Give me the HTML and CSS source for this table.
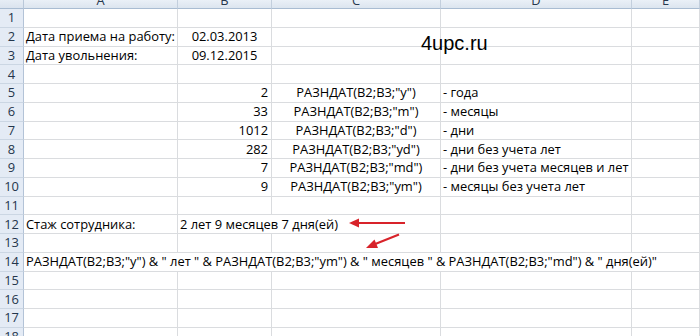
FILE: index.html
```html
<!DOCTYPE html>
<html lang="ru">
<head>
<meta charset="utf-8">
<title>РАЗНДАТ</title>
<link rel="stylesheet" href="styles.css">
</head>
<body>
<div class="page">
  <div class="sheet">
    <div class="corner"></div>
    <div class="ch">A</div><div class="ch">B</div><div class="ch">C</div><div class="ch">D</div><div class="ch">E</div>

    <div class="rh">1</div><div class="c"></div><div class="c"></div><div class="c"></div><div class="c"></div><div class="c"></div>

    <div class="rh">2</div><div class="c">Дата приема на работу:</div><div class="c m">02.03.2013</div><div class="c"></div><div class="c"></div><div class="c"></div>

    <div class="rh">3</div><div class="c">Дата увольнения:</div><div class="c m">09.12.2015</div><div class="c"></div><div class="c"></div><div class="c"></div>

    <div class="rh">4</div><div class="c"></div><div class="c"></div><div class="c"></div><div class="c"></div><div class="c"></div>

    <div class="rh">5</div><div class="c"></div><div class="c r">2</div><div class="c m">РАЗНДАТ(B2;B3;"y")</div><div class="c">- года</div><div class="c"></div>

    <div class="rh">6</div><div class="c"></div><div class="c r">33</div><div class="c m">РАЗНДАТ(B2;B3;"m")</div><div class="c">- месяцы</div><div class="c"></div>

    <div class="rh">7</div><div class="c"></div><div class="c r">1012</div><div class="c m">РАЗНДАТ(B2;B3;"d")</div><div class="c">- дни</div><div class="c"></div>

    <div class="rh">8</div><div class="c"></div><div class="c r">282</div><div class="c m">РАЗНДАТ(B2;B3;"yd")</div><div class="c">- дни без учета лет</div><div class="c"></div>

    <div class="rh">9</div><div class="c"></div><div class="c r">7</div><div class="c m">РАЗНДАТ(B2;B3;"md")</div><div class="c">- дни без учета месяцев и лет</div><div class="c"></div>

    <div class="rh">10</div><div class="c"></div><div class="c r">9</div><div class="c m">РАЗНДАТ(B2;B3;"ym")</div><div class="c">- месяцы без учета лет</div><div class="c"></div>

    <div class="rh">11</div><div class="c"></div><div class="c"></div><div class="c"></div><div class="c"></div><div class="c"></div>

    <div class="rh">12</div><div class="c">Стаж сотрудника:</div><div class="c span2">2 лет 9 месяцев 7 дня(ей)</div><div class="c"></div><div class="c"></div>

    <div class="rh">13</div><div class="c"></div><div class="c"></div><div class="c"></div><div class="c"></div><div class="c"></div>

    <div class="rh">14</div><div class="c span5">РАЗНДАТ(B2;B3;"y") &amp; " лет " &amp; РАЗНДАТ(B2;B3;"ym") &amp; " месяцев " &amp; РАЗНДАТ(B2;B3;"md") &amp; " дня(ей)"</div>

    <div class="rh">15</div><div class="c"></div><div class="c"></div><div class="c"></div><div class="c"></div><div class="c"></div>

    <div class="rh">16</div><div class="c"></div><div class="c"></div><div class="c"></div><div class="c"></div><div class="c"></div>

    <div class="rh">17</div><div class="c"></div><div class="c"></div><div class="c"></div><div class="c"></div><div class="c"></div>

    <div class="rh">18</div><div class="c"></div><div class="c"></div><div class="c"></div><div class="c"></div><div class="c"></div>
  </div>

  <div class="watermark">4upc.ru</div>

  <svg class="arrows" width="700" height="336" viewBox="0 0 700 336" aria-hidden="true">
    <line x1="405" y1="223" x2="357" y2="223" class="shaft"/>
    <polygon points="349,223 359,218.5 359,227.5" class="head"/>
    <line x1="399" y1="234.5" x2="374" y2="244.5" class="shaft"/>
    <polygon points="366,248 374.5,239.5 378,248" class="head"/>
  </svg>
</div>
</body>
</html>
```
FILE: styles.css
```css
html, body {
  margin: 0;
  padding: 0;
  background: #ffffff;
}

.page {
  position: relative;
  width: 700px;
  height: 336px;
  overflow: hidden;
  font-family: "Open Sans", "Noto Sans", sans-serif;
  font-size: 12.9px;
  color: #000000;
}

.sheet {
  display: grid;
  grid-template-columns: 24px 154px 94px 169px 191px 68px;
  grid-template-rows: 9px;
  grid-auto-rows: 18.75px;
}

.corner {
  background: linear-gradient(#e6edf5, #dae3ee);
  border-right: 1px solid #b9c8d9;
  border-bottom: 1px solid #a9bcd2;
  box-sizing: border-box;
}

.ch {
  box-sizing: border-box;
  background: linear-gradient(#eaf0f7, #dce5ef);
  border-right: 1px solid #c3cfdd;
  border-bottom: 1px solid #a9bcd2;
  color: #27384d;
  display: flex;
  align-items: flex-end;
  justify-content: center;
  overflow: hidden;
  line-height: 13px;
  padding-bottom: 1px;
}

.rh {
  box-sizing: border-box;
  background: #e4ebf5;
  border-right: 1px solid #b3c3d7;
  border-bottom: 1px solid #cbd6e3;
  color: #24364c;
  display: flex;
  align-items: flex-end;
  justify-content: center;
  line-height: 15px;
  padding-bottom: 1.3px;
}

.c {
  box-sizing: border-box;
  border-right: 1px solid #dadcdf;
  border-bottom: 1px solid #dadcdf;
  display: flex;
  align-items: flex-end;
  justify-content: flex-start;
  white-space: nowrap;
  line-height: 15px;
  padding: 0 2px 1.3px 2px;
  min-width: 0;
}

.r {
  justify-content: flex-end;
  padding-right: 3px;
}

.m {
  justify-content: center;
}

.span2 {
  grid-column: span 2;
}

.span5 {
  grid-column: span 5;
}

.watermark {
  position: absolute;
  left: 421px;
  top: 33px;
  font-family: "Liberation Sans", Arial, sans-serif;
  font-size: 20px;
  line-height: 20px;
  color: #000000;
}

.arrows {
  position: absolute;
  left: 0;
  top: 0;
  pointer-events: none;
}

.shaft {
  stroke: #d8232a;
  stroke-width: 2;
}

.head {
  fill: #d8232a;
}
```
